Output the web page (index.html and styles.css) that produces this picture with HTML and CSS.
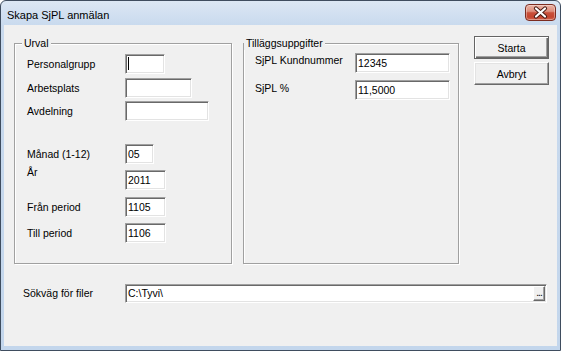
FILE: index.html
```html
<!DOCTYPE html>
<html lang="sv">
<head>
<meta charset="utf-8">
<title>Skapa SjPL anmälan</title>
<link rel="stylesheet" href="styles.css">
</head>
<body>
<div class="window">
  <div class="titlebar">
    <span class="title">Skapa SjPL anmälan</span>
    <button class="close" aria-label="Stäng">
      <svg width="29" height="15" viewBox="0 0 29 15">
        <path d="M10 3.5 L19 11.5 M19 3.5 L10 11.5" stroke="#4b1d16" stroke-width="4.2" stroke-linecap="round" fill="none"/>
        <path d="M10 3.5 L19 11.5 M19 3.5 L10 11.5" stroke="#ffffff" stroke-width="2.2" stroke-linecap="round" fill="none"/>
      </svg>
    </button>
  </div>
  <div class="client">
    <div class="top">
      <div class="group urval">
        <span class="legend">Urval</span>
        <div class="row r1"><span class="lbl">Personalgrupp</span><div class="field w40"><span class="caret"></span></div></div>
        <div class="row r2"><span class="lbl">Arbetsplats</span><div class="field w67"></div></div>
        <div class="row r3"><span class="lbl">Avdelning</span><div class="field w84"></div></div>
        <div class="row r4"><span class="lbl">Månad (1-12)</span><div class="field w29">05</div></div>
        <div class="row r5 top-aligned"><span class="lbl lbl-up">År</span><div class="field w41">2011</div></div>
        <div class="row r6"><span class="lbl">Från period</span><div class="field w41">1105</div></div>
        <div class="row r7"><span class="lbl">Till period</span><div class="field w41">1106</div></div>
      </div>
      <div class="group extra">
        <span class="legend legend-tight">Tilläggsuppgifter</span>
        <div class="row x1 top-aligned"><span class="lbl lbl-wide lbl-down">SjPL Kundnummer</span><div class="field w95">12345</div></div>
        <div class="row x2 top-aligned"><span class="lbl lbl-wide lbl-down2">SjPL %</span><div class="field w95">11,5000</div></div>
      </div>
      <div class="buttons">
        <button class="btn default">Starta</button>
        <button class="btn">Avbryt</button>
      </div>
    </div>
    <div class="pathrow">
      <span class="lbl lbl-path">Sökväg för filer</span>
      <div class="field pathfield">
        <span class="pathtext">C:\Tyvi\</span>
        <span class="browse">...</span>
      </div>
    </div>
  </div>
</div>
</body>
</html>
```

FILE: styles.css
```css
* { box-sizing: border-box; }

html, body {
  margin: 0;
  padding: 0;
  background: #ffffff;
}

body {
  font-family: "Liberation Sans", Arial, sans-serif;
  font-size: 10.5px;
  color: #000;
}

.window {
  width: 561px;
  height: 351px;
  border: 1px solid #3f4d5f;
  border-radius: 6px 6px 0 0;
  background: linear-gradient(#dce7f4 0px, #c9daee 24px, #c3d6ec 100%);
  display: flex;
  flex-direction: column;
  overflow: hidden;
}

.titlebar {
  height: 24px;
  flex: none;
  display: flex;
  justify-content: space-between;
  align-items: flex-start;
  padding: 0 4px 0 6px;
}

.title {
  font-size: 11px;
  line-height: 14px;
  padding-top: 7px;
  color: #000;
}

.close {
  margin-top: 3px;
  width: 31px;
  height: 17px;
  padding: 0;
  border: 1px solid #7c2c20;
  border-radius: 4px;
  background: linear-gradient(#eab2a4 0%, #de8f7d 42%, #c9503a 52%, #c4452f 80%, #d3664f 100%);
  box-shadow: inset 0 0 0 1px rgba(255, 255, 255, 0.35);
  display: flex;
  align-items: center;
  justify-content: center;
}

.close svg { display: block; }

.client {
  flex: 1;
  margin: 0 3px 4px 3px;
  background: #f0f0f0;
  padding: 18px 0 0 10px;
  display: flex;
  flex-direction: column;
}

.top {
  display: flex;
  align-items: flex-start;
}

.group {
  position: relative;
  height: 221px;
  border: 1px solid #a0a0a0;
  box-shadow: inset 1px 1px 0 #fff, 1px 1px 0 #fff;
  display: flex;
  flex-direction: column;
}

.urval {
  width: 218px;
  padding: 10px 0 0 12px;
}

.extra {
  width: 216px;
  margin-left: 11px;
  padding: 9px 0 0 11px;
}

.legend {
  position: absolute;
  top: -7px;
  left: 7px;
  padding: 0 2px;
  line-height: 13px;
  background: #f0f0f0;
}

.legend-tight { left: 0; }

.row {
  display: flex;
  align-items: center;
  height: 20px;
}

.top-aligned { align-items: flex-start; }

.r2 { margin-top: 4px; }
.r3 { margin-top: 3px; }
.r4 { margin-top: 23px; }
.r5 { margin-top: 6px; }
.r6 { margin-top: 7px; }
.r7 { margin-top: 6px; }
.x2 { margin-top: 7px; }

.lbl {
  width: 98px;
  flex: none;
  line-height: 13px;
  white-space: nowrap;
}

.lbl-wide { width: 100px; }
.lbl-up { margin-top: -4px; }
.lbl-down { margin-top: 1px; }
.lbl-down2 { margin-top: 2px; }

.field {
  height: 20px;
  background: #fff;
  border-style: solid;
  border-width: 1px;
  border-color: #a0a0a0 #ffffff #ffffff #a0a0a0;
  box-shadow: inset 1px 1px 0 #696969, inset -1px -1px 0 #e3e3e3;
  padding: 1px 2px 0 2px;
  line-height: 16px;
  white-space: nowrap;
  flex: none;
}

.w29 { width: 29px; }
.w40 { width: 40px; }
.w41 { width: 41px; }
.w67 { width: 67px; }
.w84 { width: 84px; }
.w95 { width: 95px; }

.caret {
  display: inline-block;
  width: 1px;
  height: 13px;
  margin-top: 1px;
  background: #000;
  vertical-align: top;
}

.buttons {
  margin-left: 15px;
  margin-top: -7px;
  display: flex;
  flex-direction: column;
  gap: 3px;
}

.btn {
  width: 75px;
  height: 23px;
  padding: 0;
  font-family: "Liberation Sans", Arial, sans-serif;
  font-size: 10.5px;
  color: #000;
  background: #f0f0f0;
  border: 1px solid;
  border-color: #ffffff #696969 #696969 #ffffff;
  box-shadow: inset -1px -1px 0 #a0a0a0, inset 1px 1px 0 #e3e3e3;
}

.btn.default {
  border-color: #646464;
  box-shadow: inset 1px 1px 0 #ffffff, inset -1px -1px 0 #696969, inset -2px -2px 0 #a0a0a0;
}

.pathrow {
  margin-top: 20px;
  display: flex;
  align-items: center;
}

.lbl-path {
  width: 102px;
  margin-left: 9px;
}

.pathfield {
  width: 422px;
  height: 19px;
  display: flex;
  padding: 1px 1px 1px 2px;
  line-height: 15px;
}

.pathtext { flex: 1; }

.browse {
  width: 12px;
  height: 15px;
  flex: none;
  background: #f0f0f0;
  border: 1px solid;
  border-color: #ffffff #696969 #696969 #ffffff;
  box-shadow: inset -1px -1px 0 #a0a0a0;
  font-size: 10px;
  line-height: 11px;
  text-align: center;
  letter-spacing: -1px;
  overflow: hidden;
}
```
